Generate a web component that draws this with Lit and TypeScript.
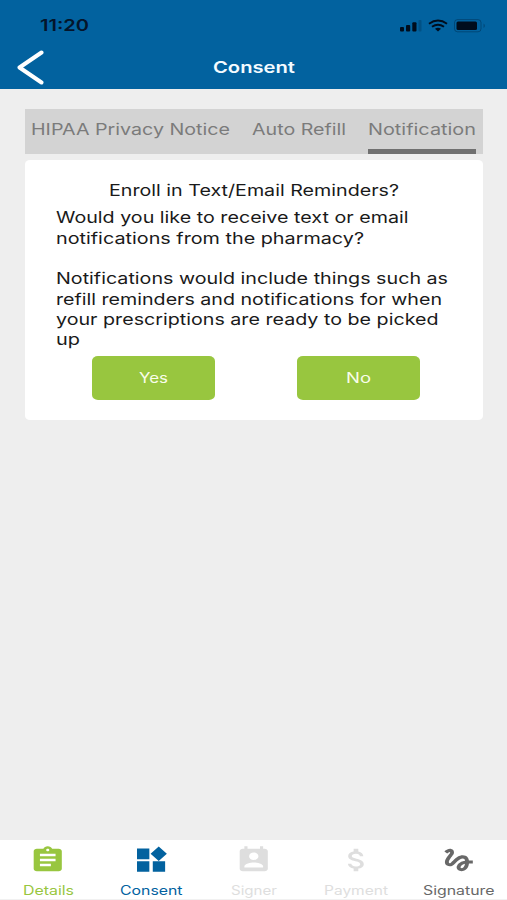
import { LitElement, html, css, svg } from "lit";
import { customElement, property } from "lit/decorators.js";

/** A single line of text, stretched horizontally to fill the given width. */
@customElement("wide-text")
class WideText extends LitElement {
  @property({ type: Number }) width = 0;
  @property() text = "";

  static styles = css`
    :host {
      display: block;
      white-space: nowrap;
      text-align: left;
      flex: none;
    }
    .line {
      display: inline-block;
      vertical-align: top;
      transform-origin: 0 0;
    }
  `;

  updated() {
    this.style.width = `${this.width}px`;
    const line = this.renderRoot.querySelector(".line") as HTMLElement;
    line.style.transform = "none";
    const natural = line.getBoundingClientRect().width;
    if (natural > 0) line.style.transform = `scaleX(${this.width / natural})`;
  }

  render() {
    return html`<span class="line">${this.text}</span>`;
  }
}

const icons = {
  details: svg`<path d="M19 3h-4.2C14.4 1.8 13.300 1 12 1s-2.400.8-2.800 2H5c-1.100 0-2 .9-2 2v14c0 1.100.9 2 2 2h14c1.100 0 2-.9 2-2V5c0-1.100-.9-2-2-2zm-7 0c.55 0 1 .45 1 1s-.45 1-1 1-1-.45-1-1 .45-1 1-1zm2 14H7v-2h7v2zm3-4H7v-2h10v2zm0-4H7V7h10v2z"/>`,
  consent: svg`<path d="M3.200 2.800h7.900v8.600H3.200zM3.200 12.900h7.900v8.400H3.200zM13.300 12.900h7.900v8.400h-7.900zM17.100 1.200l5.200 5.800-5.200 5.800-5.200-5.800z"/>`,
  signer: svg`<path d="M19 3h-1V1h-2v2H8V1H6v2H5c-1.110 0-2 .9-2 2v14c0 1.100.89 2 2 2h14c1.100 0 2-.9 2-2V5c0-1.100-.9-2-2-2zm-7 3c1.660 0 3 1.340 3 3s-1.340 3-3 3-3-1.340-3-3 1.340-3 3-3zm6 12H6v-1c0-2 4-3.100 6-3.100s6 1.100 6 3.100v1z"/>`,
  payment: svg`<path d="M11.800 10.900c-2.270-.59-3-1.200-3-2.150 0-1.090 1.010-1.850 2.700-1.850 1.780 0 2.440.85 2.500 2.100h2.210c-.07-1.720-1.120-3.300-3.210-3.810V3h-3v2.160c-1.940.42-3.500 1.680-3.500 3.610 0 2.310 1.910 3.460 4.700 4.130 2.500.6 3 1.480 3 2.410 0 .69-.49 1.790-2.700 1.790-2.060 0-2.870-.92-2.980-2.100h-2.200c.12 2.190 1.760 3.420 3.680 3.830V21h3v-2.150c1.950-.37 3.500-1.500 3.500-3.550 0-2.840-2.430-3.810-4.700-4.400z"/>`,
  signature: svg`<path d="M4.590 6.890c.7-.71 1.400-1.350 1.710-1.220.5.2 0 1.030-.3 1.520-.25.42-2.860 3.890-2.860 6.310 0 1.280.48 2.340 1.340 2.980.75.56 1.740.73 2.640.46 1.070-.31 1.950-1.400 3.060-2.770 1.210-1.490 2.830-3.440 4.080-3.440 1.630 0 1.650 1.010 1.760 1.790-3.780.64-5.380 3.670-5.380 5.370 0 1.700 1.440 3.090 3.210 3.090 1.630 0 4.290-1.330 4.690-6.100H21v-2.500h-2.470c-.15-1.650-1.090-4.200-4.030-4.200-2.250 0-4.180 1.910-4.940 2.840-.58.73-2.060 2.480-2.290 2.720-.25.3-.68.84-1.110.84-.45 0-.72-.83-.36-1.920.35-1.090 1.400-2.860 1.850-3.520.78-1.140 1.300-1.920 1.300-3.280C8.950 3.690 7.310 3 6.440 3 5.120 3 3.970 4 3.720 4.250c-.36.36-.66.66-.88.93l1.750 1.710zm9.290 11.660c-.31 0-.74-.26-.74-.72 0-.6.73-2.200 2.870-2.760-.3 2.690-1.430 3.480-2.130 3.480z"/>`,
};

const navItems = [
  { label: "Details", width: 51, tone: "green", icon: icons.details },
  { label: "Consent", width: 62.5, tone: "blue", icon: icons.consent },
  { label: "Signer", width: 46, tone: "off", icon: icons.signer },
  { label: "Payment", width: 64, tone: "off", icon: icons.payment },
  { label: "Signature", width: 71.5, tone: "dark", icon: icons.signature },
];

const tabs = [
  { label: "HIPAA Privacy Notice", width: 199, active: false },
  { label: "Auto Refill", width: 94, active: false },
  { label: "Notification", width: 108, active: true },
];

const lines = [
  { text: "Would you like to receive text or email", width: 352.5 },
  { text: "notifications from the pharmacy?", width: 308 },
  { text: "", width: 0 },
  { text: "Notifications would include things such as", width: 392 },
  { text: "refill reminders and notifications for when", width: 386 },
  { text: "your prescriptions are ready to be picked", width: 382.5 },
  { text: "up", width: 24 },
];

@customElement("app-root")
class AppRoot extends LitElement {
  static styles = css`
    :host {
      display: flex;
      flex-direction: column;
      box-sizing: border-box;
      width: 507px;
      height: 900px;
      overflow: hidden;
      background: #eeeeee;
      color: #1a1a1a;
      font-family: Inter, "Liberation Sans", sans-serif;
      font-size: 16.300px;
    }
    svg {
      display: block;
    }
    .header {
      height: 89px;
      flex: none;
      background: #02629f;
    }
    .status {
      display: flex;
      justify-content: space-between;
      padding: 16px 21px 0 40px;
      height: 20px;
      line-height: 20px;
      font-size: 15.5px;
      font-weight: 600;
      color: #04152b;
    }
    .title-row {
      display: grid;
      grid-template-columns: 1fr auto 1fr;
      align-items: center;
      height: 36px;
      margin-top: 13px;
      color: #f4fbff;
      font-size: 16px;
      font-weight: 600;
      line-height: 20px;
    }
    .back {
      margin-left: 15px;
    }
    .main {
      flex: 1;
      padding: 20px 24px 0 25px;
    }
    .tabs {
      display: flex;
      gap: 22px;
      height: 45px;
      padding-left: 6px;
      background: #d3d3d3;
      color: #7b7b7b;
    }
    .tab {
      box-sizing: border-box;
      height: 45px;
      padding-top: 10px;
      line-height: 20px;
      border-bottom: 5px solid transparent;
    }
    .tab.active {
      border-bottom-color: #707070;
    }
    .card {
      box-sizing: border-box;
      height: 259.500px;
      margin-top: 6px;
      padding-top: 20px;
      background: #fff;
      border-radius: 5px / 4px;
    }
    .heading {
      display: flex;
      justify-content: center;
      line-height: 20px;
    }
    .copy {
      margin: 7.300px 0 0 30.500px;
      line-height: 20.350px;
    }
    .row {
      height: 20.350px;
    }
    .actions {
      display: flex;
      gap: 82px;
      margin: 6px 0 0 67px;
    }
    .button {
      display: flex;
      align-items: center;
      justify-content: center;
      box-sizing: border-box;
      width: 123px;
      height: 44.500px;
      padding: 0;
      border: 0;
      border-radius: 6px / 5px;
      background: #98c63f;
      color: #f8fdea;
      font: 400 14px/20px Inter, "Liberation Sans", sans-serif;
    }
    .nav {
      display: flex;
      justify-content: space-between;
      box-sizing: border-box;
      height: 60.500px;
      flex: none;
      padding: 5px 0 0;
      background: #fff;
      border-bottom: 1px solid #f1f1f1;
      font-size: 12.800px;
      line-height: 16px;
    }
    .item {
      display: flex;
      flex-direction: column;
      align-items: center;
      width: 96px;
      gap: 8px;
    }
    .green {
      color: #98c63f;
    }
    .blue {
      color: #02629f;
    }
    .off {
      color: #dedede;
    }
    .dark {
      color: #686868;
    }
  `;

  render() {
    return html`
      <div class="header">
        <div class="status">
          <wide-text text="11:20" .width=${49}></wide-text>
          <svg width="88" height="20" viewBox="0 0 88 20">
            <g fill="#000d1d">
              <rect x="2" y="11" width="4" height="4.500" rx="1" />
              <rect x="8" y="9" width="4.200" height="6.500" rx="1" />
              <rect x="14.300" y="6.300" width="4.200" height="9.200" rx="1" />
              <rect x="20.500" y="4" width="3" height="11.500" rx="1" opacity=".2" />
              <path d="M40 15.500 37 12.700q3-2 6 0z" />
              <rect x="58.500" y="5.500" width="20.500" height="8.500" rx="1.500" />
              <path d="M85.500 7.500q3 2.200 0 4.500z" opacity=".25" />
            </g>
            <g fill="none" stroke="#000d1d" stroke-width="2">
              <path d="M31 7.700q9-6.200 18 0M34 10.800q6-4.200 12 0" />
              <rect x="56.500" y="3.600" width="26.500" height="12.200" rx="3" stroke-width="1" opacity=".3" />
            </g>
          </svg>
        </div>
        <div class="title-row">
          <svg class="back" width="32" height="36" viewBox="0 0 32 36">
            <path d="M26.500 3.500 4.500 18.500 26.500 33.500" fill="none" stroke="#fff" stroke-width="4" stroke-linecap="round" stroke-linejoin="round" />
          </svg>
          <wide-text text="Consent" .width=${82}></wide-text>
        </div>
      </div>
      <div class="main">
        <div class="tabs">
          ${tabs.map(
            (t) => html`<div class="tab ${t.active ? "active" : ""}">
              <wide-text .text=${t.label} .width=${t.width}></wide-text>
            </div>`
          )}
        </div>
        <div class="card">
          <div class="heading">
            <wide-text text="Enroll in Text/Email Reminders?" .width=${290}></wide-text>
          </div>
          <div class="copy">
            ${lines.map(
              (l) => html`<div class="row">
                ${l.text ? html`<wide-text .text=${l.text} .width=${l.width}></wide-text>` : ""}
              </div>`
            )}
          </div>
          <div class="actions">
            <button class="button"><wide-text text="Yes" .width=${29}></wide-text></button>
            <button class="button"><wide-text text="No" .width=${25}></wide-text></button>
          </div>
        </div>
      </div>
      <div class="nav">
        ${navItems.map(
          (n) => html`<div class="item ${n.tone}">
            <svg width="37.500" height="30" viewBox="0 0 24 24" preserveAspectRatio="none" fill="currentColor">${n.icon}</svg>
            <wide-text .text=${n.label} .width=${n.width}></wide-text>
          </div>`
        )}
      </div>
    `;
  }
}
